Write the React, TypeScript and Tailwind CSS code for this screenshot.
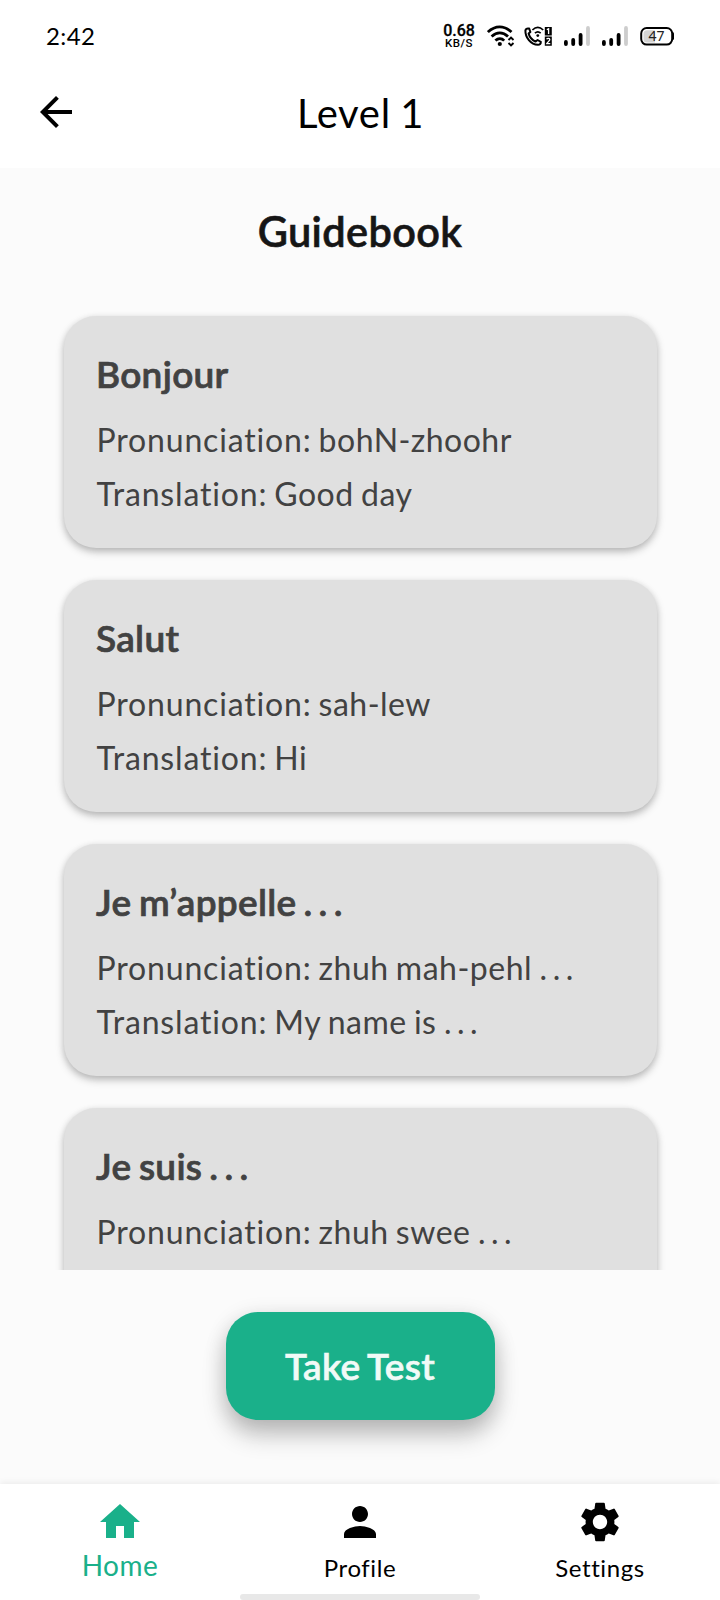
import { MdArrowBack, MdHome, MdPerson, MdSettings } from "react-icons/md";

const phrases = [
  { title: "Bonjour", pronunciation: "bohN-zhoohr", translation: "Good day" },
  { title: "Salut", pronunciation: "sah-lew", translation: "Hi" },
  { title: "Je m’appelle", pronunciation: "zhuh mah-pehl", translation: "My name is", open: true },
  { title: "Je suis", pronunciation: "zhuh swee", translation: "I am", open: true },
];

function WifiIcon() {
  return (
    <svg className="h-6 w-7" viewBox="0 0 28 24" fill="none" stroke="black" strokeWidth="2.8">
      <path d="M.9 8.1C8.2 1.2 17.2 1.2 24.5 8.1" />
      <path d="M4.6 12.6C9.8 7.6 15.8 7.6 21 12.6" />
      <path d="M8.4 16.6C11.2 13.9 14.6 13.9 17.2 16.6" />
      <circle cx="12.8" cy="20" r="2.1" fill="black" stroke="none" />
      <path d="M21.5 16L24 13.5L26.5 16M21.5 19L24 21.5L26.5 19" strokeWidth="1.9" />
    </svg>
  );
}

function CallIcon() {
  return (
    <svg className="h-6 w-7" viewBox="0 0 28 24" fill="none" stroke="black" strokeWidth="2">
      <path d="M1.4 6.5C1.2 13.2 6.6 20.8 14 20.8C15.8 20.8 17 19.6 16.8 17.8L13.6 16L11.4 17.6C8 15.8 5.6 13 4.6 9.6L6.4 8L5.2 4.6C3.2 4.2 1.8 4.8 1.4 6.5Z" strokeLinejoin="round" />
      <path d="M8.4 6C11.8 2.8 15.8 2.8 19.2 6M10.9 9.2C12.8 7.5 14.8 7.5 16.7 9.2" strokeWidth="1.7" />
      <circle cx="13.8" cy="11.6" r="1.4" fill="black" stroke="none" />
      <path d="M20.8 3h7v8.6h-7zM20.8 12.6h7v9.2h-7z" fill="black" stroke="none" />
      <path d="M22.8 5.6L24.6 4.8V10M22.6 15.3C23.3 13.8 25.9 14 25.8 15.6C25.7 16.8 23.8 17.7 22.8 19.6H26.3" stroke="white" strokeWidth="1.3" />
    </svg>
  );
}

function SignalIcon() {
  return (
    <svg className="h-6 w-7" viewBox="0 0 28 24" strokeWidth="3.8" strokeLinecap="round">
      <path d="M1.9 20v-2M9.2 20v-4M16.6 20V11" stroke="black" />
      <path d="M24 20V4" stroke="#cdcdcd" />
    </svg>
  );
}

function StatusBar() {
  return (
    <div className="flex h-14 shrink-0 items-center text-black">
      <span className="mt-[15px] ml-[46px] w-[397px] text-[24px] leading-[30px] tracking-[0.4px]">2:42</span>
      <div className="mt-4 flex w-8 flex-col items-center font-['Roboto',sans-serif]">
        <div className="text-[16px] leading-[14px] font-medium whitespace-nowrap [-webkit-text-stroke:0.3px_black]">0.68</div>
        <div className="text-[11.5px] leading-[11px] font-medium tracking-[0.5px] whitespace-nowrap">KB/S</div>
      </div>
      <div className="mt-4 ml-3 flex">
        <WifiIcon />
        <div className="ml-[9px]"><CallIcon /></div>
        <div className="ml-[12px]"><SignalIcon /></div>
        <div className="ml-[10px]"><SignalIcon /></div>
      </div>
      <svg className="mt-4 ml-[10px] h-6 w-[35px]" viewBox="0 0 35 24">
        <path d="M32 8h.5a1.5 1.5 0 0 1 1.5 1.5v5a1.5 1.5 0 0 1-1.5 1.5H32z" fill="black" />
        <rect x="1.2" y="4" width="31" height="16.6" rx="5.5" fill="white" stroke="black" strokeWidth="2" />
        <path d="M7 6.2h8v12.2h-8a3.5 3.5 0 0 1-3.5-3.5V9.7A3.5 3.5 0 0 1 7 6.2z" fill="#d4d4d4" />
        <text x="16.5" y="17" textAnchor="middle" fontSize="14" fill="#222222" className="font-['Noto_Sans',sans-serif]">47</text>
      </svg>
    </div>
  );
}

function Detail({ label, value, open }: { label: string; value: string; open?: boolean }) {
  return (
    <p className="text-[32px] leading-[54px] whitespace-nowrap">
      <span className="tracking-[0.83px] [word-spacing:-2px]">{label}: </span>
      <span className="tracking-[0.5px] [word-spacing:-1.4px]">{value}</span>
      {open && <span className="ml-[2.5px] tracking-[0.5px] [word-spacing:-3.7px]"> . . .</span>}
    </p>
  );
}

function PhraseCard({ title, pronunciation, translation, open }: (typeof phrases)[number]) {
  return (
    <article className="h-[232px] shrink-0 rounded-[32px] bg-[#e0e0e0] pt-[35px] pr-8 pl-[33px] text-[#424242] shadow-[0_4px_8px_rgba(0,0,0,0.22),0_2px_6px_rgba(0,0,0,0.1)]">
      <h2 className="-ml-[0.5px] text-[37px] leading-[46px] font-semibold tracking-[0.3px] whitespace-nowrap [-webkit-text-stroke:0.7px_#424242] [word-spacing:-2px]">
        {title}
        {open && <span className="ml-[0.8px] [word-spacing:-3.4px]"> . . .</span>}
      </h2>
      <div className="mt-4">
        <Detail label="Pronunciation" value={pronunciation} open={open} />
        <Detail label="Translation" value={translation} open={open} />
      </div>
    </article>
  );
}

export default function App() {
  return (
    <div className="flex h-[1600px] w-[720px] flex-col overflow-hidden bg-[#fbfbfb] font-['Lato',sans-serif]">
      <header className="shrink-0 bg-white text-black">
        <StatusBar />
        <div className="grid h-28 grid-cols-[1fr_auto_1fr] items-center px-8">
          <button aria-label="Back" className="w-12"><MdArrowBack size={48} /></button>
          <h1 className="pt-[2px] pl-[1px] text-[40px] leading-[48px] tracking-[0.7px] [word-spacing:-1.5px]">Level 1</h1>
        </div>
      </header>
      <h2 className="mt-[39px] shrink-0 text-center text-[41.5px] leading-[48px] font-semibold tracking-[0.35px] text-[#161616] [-webkit-text-stroke:0.6px_#161616]">Guidebook</h2>
      <main className="mt-[45px] flex h-[970px] shrink-0 flex-col gap-8 overflow-hidden px-[63.5px] pt-4">
        {phrases.map((phrase) => <PhraseCard key={phrase.title} {...phrase} />)}
      </main>
      <div className="flex h-[214px] shrink-0 justify-center pt-[42px]">
        <button className="h-[108px] w-[269px] rounded-[32px] bg-[#1ab08a] text-[37px] font-semibold tracking-[0.3px] text-[#f1faf7] shadow-[0_16px_24px_rgba(0,0,0,0.2),0_5px_22px_rgba(0,0,0,0.14)] [-webkit-text-stroke:0.6px_#f1faf7] [word-spacing:-2px]">Take Test</button>
      </div>
      <nav className="relative grid h-[116px] shrink-0 grid-cols-3 bg-white text-black shadow-[0_-2px_6px_rgba(0,0,0,0.06)]">
        <div className="flex flex-col items-center pt-[14px] text-[#1ab08a]">
          <MdHome size={48} />
          <span className="mt-[2px] text-[28px] leading-[34px] tracking-[0.5px]">Home</span>
        </div>
        <div className="flex flex-col items-center pt-[14px]">
          <MdPerson size={48} />
          <span className="mt-[6px] text-[24px] leading-[32px] tracking-[0.6px]">Profile</span>
        </div>
        <div className="flex flex-col items-center pt-[14px]">
          <MdSettings size={48} />
          <span className="mt-[6px] text-[24px] leading-[32px] tracking-[0.6px]">Settings</span>
        </div>
        <div className="absolute bottom-0 left-60 h-[6px] w-60 rounded-[3px] bg-[#e8e8e8]" />
      </nav>
    </div>
  );
}
